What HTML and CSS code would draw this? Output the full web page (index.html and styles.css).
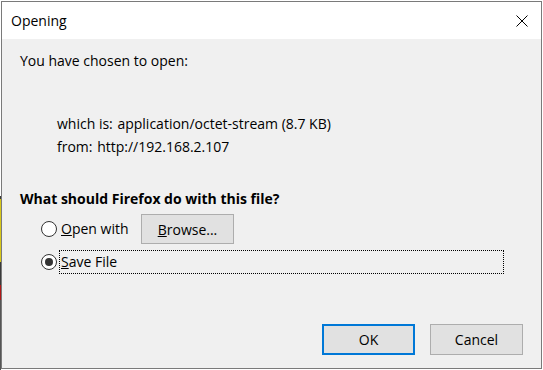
FILE: index.html
```
<!DOCTYPE html>
<html lang="en">
<head>
    <meta charset="UTF-8">
    <meta name="viewport" content="width=device-width, initial-scale=1.0">
    <title>Opening</title>
    <link rel="stylesheet" href="styles.css">
</head>
<body>
    <div class="dialog">
        <div class="title-bar">
            <span class="title">Opening</span>
            <svg class="close-icon" width="12" height="12" viewBox="0 0 12 12">
                <path d="M0.5 0.5 L11.5 11.5 M11.5 0.5 L0.5 11.5" stroke="#000" stroke-width="1" fill="none"/>
            </svg>
        </div>
        <div class="dialog-body">
            <div class="intro">You have chosen to open:</div>
            <div class="details">
                <div>which is: <span class="value">application/octet-stream (8.7 KB)</span></div>
                <div>from: <span class="value">http://192.168.2.107</span></div>
            </div>
            <div class="question">What should Firefox do with this file?</div>
            <div class="option-row">
                <span class="radio"></span>
                <span class="option-label open-label"><u>O</u>pen with</span>
                <button class="win-button browse-button"><u>B</u>rowse...</button>
            </div>
            <div class="option-row">
                <span class="radio checked"></span>
                <span class="option-label focused"><u>S</u>ave File</span>
            </div>
            <div class="button-row">
                <button class="win-button default-button">OK</button>
                <button class="win-button">Cancel</button>
            </div>
        </div>
    </div>
</body>
</html>
```
FILE: styles.css
```
body {
    margin: 0;
    padding: 1px 0 0 1px;
    width: 543px;
    height: 370px;
    box-sizing: border-box;
    background: linear-gradient(to bottom, #ffffff 0, #ffffff 196px, #3a3a3a 196px, #3a3a3a 199px, #d8c81a 199px, #d8c81a 262px, #3a3a3a 262px, #3a3a3a 285px, #b01818 285px, #b01818 300px, #555555 300px, #555555 370px);
    background-size: 1px 370px;
    background-repeat: no-repeat;
    background-color: #ffffff;
    font-family: "Open Sans", "Noto Sans", sans-serif;
    font-size: 14px;
    color: #000;
}
.dialog {
    width: 541px;
    height: 368px;
    box-sizing: border-box;
    border: 1px solid #7a7a7a;
    background-color: #f0f0f0;
    display: flex;
    flex-direction: column;
}
.title-bar {
    height: 37px;
    background-color: #ffffff;
    display: flex;
    align-items: center;
    justify-content: space-between;
    padding: 0 13px 0 9px;
    flex-shrink: 0;
}
.title {
    font-size: 14px;
}
.close-icon {
    display: block;
}
.dialog-body {
    flex: 1;
    display: flex;
    flex-direction: column;
    padding: 12px 18px 13px 18px;
}
.intro {
    line-height: 20px;
}
.details {
    margin-top: 41px;
    padding-left: 37px;
    line-height: 23px;
}
.details .value {
    margin-left: 1px;
}
.question {
    margin-top: 31px;
    line-height: 20px;
    font-weight: bold;
}
.option-row {
    display: flex;
    align-items: center;
    padding-left: 21px;
    height: 30px;
}
.option-row + .option-row {
    margin-top: 6px;
    height: 24px;
}
.question + .option-row {
    margin-top: 5px;
}
.radio {
    width: 16px;
    height: 16px;
    box-sizing: border-box;
    border: 1px solid #333;
    border-radius: 50%;
    background-color: #fff;
    position: relative;
    flex-shrink: 0;
}
.radio.checked::after {
    content: "";
    position: absolute;
    top: 3px;
    left: 3px;
    width: 8px;
    height: 8px;
    border-radius: 50%;
    background-color: #333;
}
.option-label {
    margin-left: 2px;
    line-height: 20px;
    padding-left: 2px;
}
.open-label {
    width: 80px;
}
.option-label.focused {
    flex: 1;
    height: 24px;
    box-sizing: border-box;
    border: 1px dotted #000;
    line-height: 22px;
    margin-right: 19px;
    padding-left: 1px;
}
.win-button {
    font-family: inherit;
    font-size: 14px;
    color: #000;
    background-color: #e1e1e1;
    border: 1px solid #adadad;
    width: 93px;
    height: 31px;
    padding: 0;
}
.browse-button {
    height: 30px;
}
.button-row {
    margin-top: auto;
    display: flex;
    justify-content: flex-end;
    gap: 15px;
}
.default-button {
    border: 2px solid #0078d7;
}
```
